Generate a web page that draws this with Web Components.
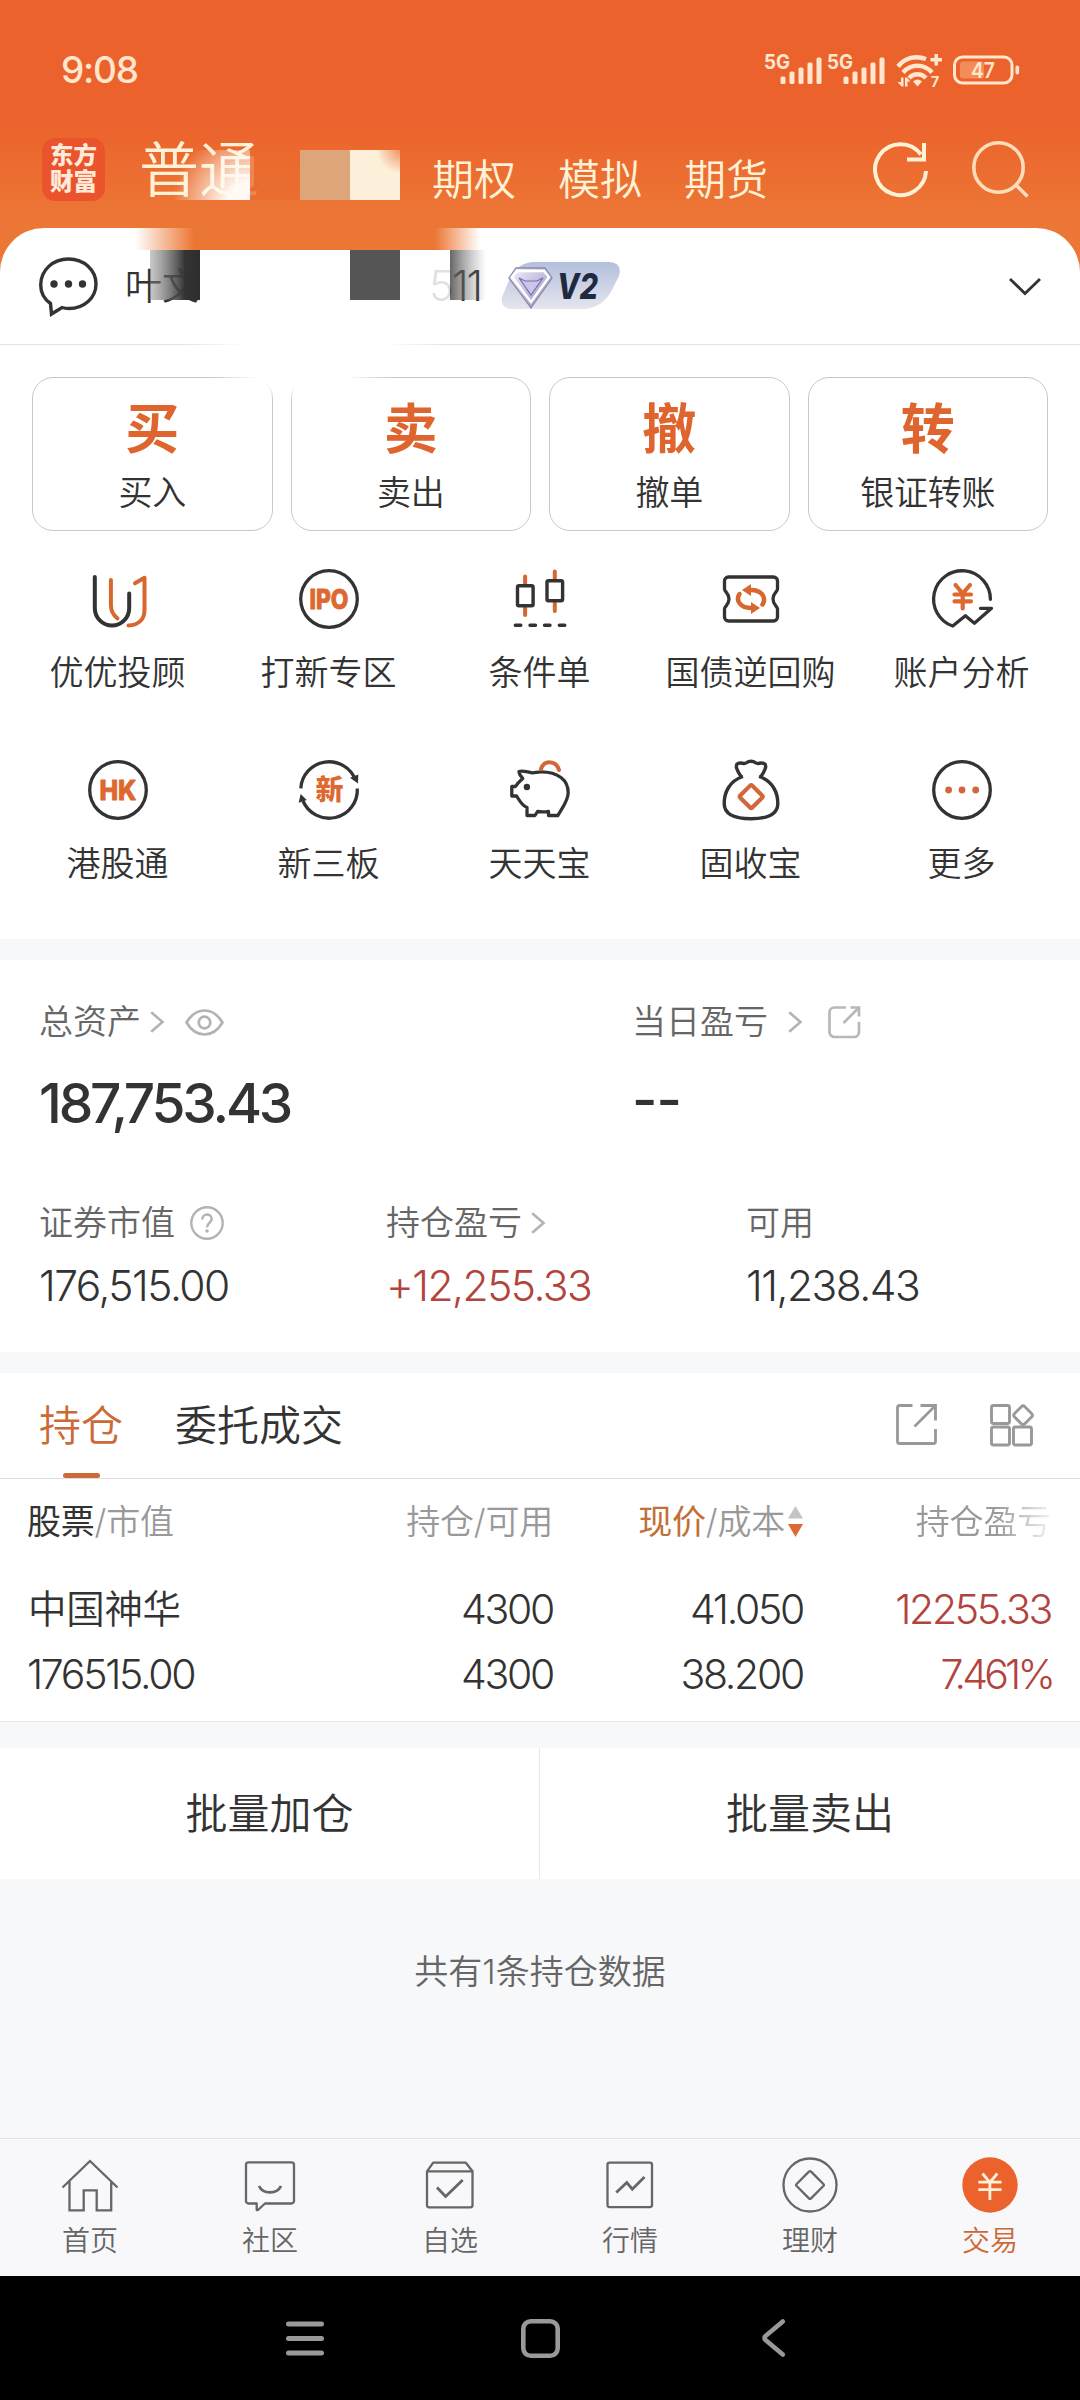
<!DOCTYPE html>
<html lang="zh-CN">
<head>
<meta charset="UTF-8">
<title>东方财富 - 交易</title>
<style>
    body {
        margin: 0;
        width: 1080px;
        background: #f7f8fa;
        color: #333;
        font-family: Inter, "Noto Sans CJK SC", sans-serif;
        font-size: 34px;
        font-weight: 350;
        line-height: 1;
    }
</style>
</head>
<body>
<trade-app></trade-app>

<script>
// Icônes dessinées dans une boîte 60x60, sauf mention contraire
const ICONS = {
    chat: `<g fill="none" stroke="#333" stroke-width="3.4"><path d="M11.5 46.5C5 42 1.7 35 1.7 28 1.7 13 14 2 29.500 2S57 13 57 27 45 51.500 30 51.500c-3 0-5-.3-7-1L12.500 57Z"/></g><g fill="#333"><circle cx="15" cy="27" r="3.7"/><circle cx="29.500" cy="27" r="3.7"/><circle cx="43.500" cy="27" r="3.7"/></g>`,
    refresh: `<g fill="none" stroke="#fff1d6" stroke-width="4"><path d="M54 30A25.500 25.500 0 1 1 49 13.500"/><path d="M52 2V18.500H35"/></g>`,
    search: `<g fill="none" stroke="#ffdcba" stroke-width="3.6"><circle cx="26.500" cy="26.500" r="24.700"/><path d="M43.500 43.500 55.500 55.500"/></g>`,
    you: `<g fill="none" stroke-width="4" stroke-linecap="round" stroke-linejoin="round"><path stroke="#333" d="M6.800 8V39A17.200 17.600 0 0 0 41.200 39V24.500"/><g stroke="#d8672f"><path d="M22.900 11V36C22.900 42 25 46 29.500 49.300"/><path d="M40.500 56.500C51 56 56.500 50 56.500 41V8.700L47 14.300"/></g></g>`,
    ipo: `<circle cx="30" cy="30" r="28.300" fill="none" stroke="#333" stroke-width="3.300"/><text x="30" y="40" text-anchor="middle" textLength="39" lengthAdjust="spacingAndGlyphs" font-size="27" font-weight="800" fill="#dd6830" stroke="#dd6830" stroke-width=".8" stroke-linejoin="round">IPO</text>`,
    candle: `<g fill="none" stroke-width="4" stroke-linecap="round"><path stroke="#d8672f" d="M15.100 7.500V15M15.100 38V46M44.800 2.500V10M44.800 34V42"/><g stroke="#333" stroke-width="3.400"><rect x="7.500" y="16.700" width="15.600" height="20" rx="1.500"/><rect x="37" y="11.700" width="15.600" height="20" rx="1.500"/><path d="M5.300 56.300h5.500M20 56.300h5.500M34.500 56.300h5.500M49.300 56.300h5.500"/></g></g>`,
    ticket: `<path fill="none" stroke="#333" stroke-width="3.300" stroke-linejoin="round" d="M7.500 8H52.500a4 4 0 0 1 4 4V20C56.500 23 52 24 52 30S56.500 37 56.500 40V48a4 4 0 0 1-4 4H7.500a4 4 0 0 1-4-4V40C3.500 37 8 36 8 30S3.500 23 3.500 20V12a4 4 0 0 1 4-4Z"/><g fill="none" stroke="#d8672f" stroke-width="4.500" stroke-linecap="round"><path d="M18.500 25C14 32 20 39 30 39"/><path d="M41.500 35.500C46 28 40 21 30 21"/></g><path fill="#d8672f" d="M30 33v12l9-6ZM30 15v12l-9-6Z"/>`,
    analysis: `<path fill="none" stroke="#333" stroke-width="3.300" stroke-linejoin="round" stroke-linecap="round" d="M58.400 30.300A28.400 28.400 0 1 0 20.700 57L33.400 46.700 42.400 54.300 59.500 39.300H48.500"/><path fill="none" stroke="#dd6830" stroke-width="4.200" stroke-linecap="round" d="M23.500 16 30.700 24.500 38 16M30.700 25V39.500M22.500 25.500H39M22.500 32.300H39"/>`,
    hk: `<circle cx="30" cy="30" r="28.300" fill="none" stroke="#333" stroke-width="3.300"/><text x="30" y="40" text-anchor="middle" textLength="37" lengthAdjust="spacingAndGlyphs" font-size="27" font-weight="800" fill="#dd6830" stroke="#dd6830" stroke-width=".8" stroke-linejoin="round">HK</text>`,
    neeq: `<g fill="none" stroke="#333" stroke-width="3.300"><path d="M1.800 28.300A28.300 28.300 0 0 1 56.500 20"/><path d="M58.300 28.500A28.300 28.300 0 0 1 4 41"/></g><path fill="#333" d="M51 17.700 59.300 14.500 59 23.500ZM-.3 42.800 1.600 34 7.800 40Z"/><text x="30.500" y="39.500" text-anchor="middle" font-size="28" font-weight="900" fill="#dd6830">新</text>`,
    pig: `<path fill="none" stroke="#333" stroke-width="3.300" stroke-linejoin="round" d="M12.800 18.500C10.500 16 9 14.500 9 11.500 13 10 18 12.500 22 12.800 25 13 27 11.800 31 11.800 48 11.800 58.200 20 58.200 32.500 58.200 41 52 48 47.900 55.500H38.500V51.300C35 52 31 52 27.500 51.500L25 55.500H17V47.500C11 45 9.500 40 6.500 36H1.800V26.500H5.500C7.500 23 10 21 12.800 18.500Z"/><circle cx="16.900" cy="27" r="3.200" fill="#333"/><path fill="none" stroke="#d0683a" stroke-width="4" stroke-linecap="round" d="M31 9C34 0 46 0 49 10"/>`,
    bag: `<g fill="none" stroke="#333" stroke-width="3.400" stroke-linejoin="round"><path d="M20.400 17C16 11 13.500 5 17 3.500 20 2 23 4.500 25 3 28 .8 32 .8 35 3 37 4.500 40 2 43 3.500 46.500 5 44 11 39.600 17"/><path d="M22 16.500C8 21 3.200 33 3.200 43.500 3.200 55 15 58.700 30 58.700S56.800 55 56.800 43.500C56.800 33 52 21 38 16.500"/></g><rect x="21.700" y="28.100" width="17" height="17" rx="1.500" transform="rotate(45 30.200 36.600)" fill="none" stroke="#d0683a" stroke-width="4.200"/>`,
    more: `<circle cx="30" cy="30" r="28.300" fill="none" stroke="#333" stroke-width="3.300"/><g fill="#d0683a"><circle cx="16.600" cy="30" r="3.400"/><circle cx="30" cy="30" r="3.400"/><circle cx="43.700" cy="30" r="3.400"/></g>`,
    home: `<path d="M2.500 33.500 30 7 57.500 33.500M9.500 27V56.300H23.700V36.300H36.700V56.300H51.200V27"/>`,
    community: `<path stroke-linejoin="round" d="M8.500 8.300H51.500a2.500 2.500 0 0 1 2.500 2.500V47a2.500 2.500 0 0 1-2.500 2.500H25L18 56H16.700V49.500H8.500A2.500 2.500 0 0 1 6 47V10.800A2.500 2.500 0 0 1 8.500 8.300Z"/><path stroke-width="2.800" d="M19 32C23 40.500 37 40.500 41 32"/>`,
    favorite: `<path stroke-linejoin="round" d="M7 17.300 13.200 8.700H45.800L52.500 17.300V51.300a2 2 0 0 1-2 2H9a2 2 0 0 1-2-2ZM7 17.300H52.500"/><path stroke-width="2.800" d="M17 33.500 25.600 42.500 42.700 26"/>`,
    market: `<rect x="7.500" y="8.600" width="44.500" height="44.500" rx="2"/><path stroke-width="2.800" d="M16.300 38.500 26.800 28.500 32.300 35.200 44.500 23"/>`,
    wealth: `<circle cx="30" cy="31" r="26.500"/><rect x="19.800" y="20.800" width="20.400" height="20.400" rx="1.500" transform="rotate(45 30 31)"/>`,
    trade: `<circle cx="30" cy="31" r="27.700" fill="#eb622c" stroke="none"/><path stroke="#fff0d6" stroke-width="2.800" d="M22.500 19.500 29.900 28.500 37.300 19.500M29.900 28V46M18.300 28.200H41.500M18.300 35.700H41.500"/>`,
    eye: `<g fill="none" stroke="#b3b3b3" stroke-width="2.700"><path stroke-linejoin="round" d="M1.500 13.500C11-2.500 28-2.500 37.500 13.500 28 29.500 11 29.500 1.500 13.500Z"/><circle cx="19.500" cy="13.500" r="5.800"/></g>`,
    help: `<circle cx="17" cy="17" r="15.700" fill="none" stroke="#b3b3b3" stroke-width="2.400"/><path fill="none" stroke="#b3b3b3" stroke-width="2.500" d="M12.300 13.500C12.300 7 21.700 7 21.700 13 21.700 17 17 16.500 17 21.500"/><circle cx="17" cy="25" r="1.800" fill="#b3b3b3"/>`,
    right: `<path fill="none" stroke="#b3b3b3" stroke-width="2.600" d="M1.200 1.200 12.500 11 1.200 20.800"/>`,
    down: `<path fill="none" stroke="#333" stroke-width="2.800" d="M1 1 16 15.500 31 1"/>`,
    shareSmall: `<path fill="none" stroke="#b8b8b8" stroke-width="2.700" d="M18 1.500H6.500a5 5 0 0 0-5 5V26a5 5 0 0 0 5 5H26a5 5 0 0 0 5-5V16M22.500 1.500H31V10.500M15.500 17 30.500 2"/>`,
    share: `<path fill="none" stroke="#999" stroke-width="2.800" d="M16.500 1.500H3.500a2 2 0 0 0-2 2V37.500a2 2 0 0 0 2 2H37.500a2 2 0 0 0 2-2V25M24.500 1.500H39.500V16.500M18.500 22.500 39 2"/>`,
    blocks: `<g fill="none" stroke="#999" stroke-width="2.900"><rect x="1.500" y="1.500" width="18" height="18" rx="2"/><rect x="1.500" y="23" width="18" height="18" rx="2"/><rect x="23.500" y="23" width="18" height="18" rx="2"/><rect x="25.800" y="3.900" width="14.500" height="14.500" rx="2.500" transform="rotate(45 33.000 11.200)"/></g>`,
    sort: `<path fill="#c4c4c4" d="M7.500 0 15 12.500H0Z"/><path fill="#dc6a32" d="M0 18H15L7.500 31Z"/>`,
    menu: `<path stroke="#999" stroke-width="5" stroke-linecap="round" d="M2.500 4H35.500M2.500 18.500H35.500M2.500 33H35.500"/>`,
    square: `<rect x="2.300" y="2.300" width="34.400" height="34.400" rx="7.500" fill="none" stroke="#999" stroke-width="4.600"/>`,
    back: `<path fill="none" stroke="#999" stroke-width="4.600" stroke-linecap="round" stroke-linejoin="round" d="M20.800 2.500 3.500 17Q1.500 19 3.500 21L20.800 35.500"/>`
};

const icon = (name, w = 60, h = w, box = `0 0 ${w} ${h}`) =>
    `<svg width="${w}" height="${h}" viewBox="${box}" fill="none">${ICONS[name]}</svg>`;

// Classe de base : shadow root ouvert, styles puis contenu
class BaseElement extends HTMLElement {
    constructor() {
        super();
        this.attachShadow({ mode: 'open' });
    }

    connectedCallback() {
        this.shadowRoot.innerHTML = `
            <style>
                svg { display: block; flex: none; overflow: visible; }
                ${this.styles()}
            </style>
            ${this.template()}
        `;
    }

    styles() { return ''; }
    template() { return '<slot></slot>'; }
}

class StatusBar extends BaseElement {
    styles() {
        return `
            :host {
                display: flex;
                align-items: center;
                justify-content: space-between;
                height: 139px;
                margin-bottom: -47px;
                padding: 0 60px 0 61px;
                box-sizing: border-box;
                color: #ffe6cc;
            }
            .time { font-size: 37px; font-weight: 500; letter-spacing: -1.2px; }
        `;
    }

    bars(x) {
        return [76, 71, 67, 62, 57].map((top, i) =>
            `<rect x="${x + i * 9}" y="${top}" width="5" height="${83.5 - top}" rx="1.5"/>`).join('');
    }

    template() {
        return `
            <span class="time">9:08</span>
            <svg width="256" height="40" viewBox="764 49.5 256 40" fill="#ffe6cc">
                <text x="764" y="68.500" font-size="20" font-weight="700" textLength="26" lengthAdjust="spacingAndGlyphs">5G</text>
                ${this.bars(780.500)}
                <text x="827" y="68.500" font-size="20" font-weight="700" textLength="26" lengthAdjust="spacingAndGlyphs">5G</text>
                ${this.bars(843.500)}
                <g fill="none" stroke="#ffe6cc" stroke-width="4.500">
                    <path d="M898 66C905 57 916 54.500 926 58.500"/>
                    <path d="M903 72C911 63 924 63 932 72"/>
                    <path d="M909 77.500C914 72.500 921 72.500 926 77.500"/>
                </g>
                <path d="M913 81Q917.500 77 922 81L917.500 86ZM930.500 57.500h4v-4h3.500v4h4v3.500h-4v4h-3.500v-4h-4Z"/>
                <path d="M901 77h2.500v9h-2l-4-4.500h3.500ZM905 86h2.500v-5h3l-3.500-4h-2Z"/>
                <text x="931" y="86.500" font-size="14" font-weight="700">7</text>
                <rect x="954.500" y="56.500" width="57.500" height="26" rx="8" fill="none" stroke="#ffe6cc" stroke-width="3"/>
                <rect x="960" y="61" width="24" height="17" rx="3" fill="#f28d58"/>
                <rect x="1015.500" y="65" width="3.600" height="9" rx="1.800"/>
                <text x="983" y="77.800" font-size="22" font-weight="600" text-anchor="middle" textLength="24" lengthAdjust="spacingAndGlyphs">47</text>
            </svg>
        `;
    }
}

class AppHeader extends BaseElement {
    styles() {
        return `
            :host {
                display: flex;
                align-items: center;
                height: 154px;
                margin-bottom: -18px;
                padding: 0 51px 0 42px;
                color: #fff1d6;
            }
            .logo {
                display: grid;
                place-content: center;
                width: 63px;
                height: 63px;
                border-radius: 13px;
                background: #ea532b;
                color: #ffe9d8;
                font-size: 23.500px;
                font-weight: 900;
                line-height: 26.500px;
            }
            .main { margin-left: 34px; font-size: 60px; width: 293px; padding-top: 2px; }
            nav { display: flex; gap: 42px; padding-top: 21px; font-size: 42px; }
            .tools { display: flex; gap: 43px; margin-left: auto; }
        `;
    }

    template() {
        return `
            <div class="logo"><span>东方</span><span>财富</span></div>
            <div class="main">普通</div>
            <nav><span>期权</span><span>模拟</span><span>期货</span></nav>
            <div class="tools">${icon('refresh', 57)}${icon('search', 57)}</div>
        `;
    }
}

class AccountBar extends BaseElement {
    styles() {
        return `
            :host {
                display: flex;
                align-items: center;
                height: 116px;
                padding: 0 39px;
                background: #fff;
                border-radius: 44px 44px 0 0;
                border-bottom: 1px solid #e2e2e2;
            }
            .name { width: 304px; margin-left: 27px; font-size: 37px; }
            .code { width: 73px; font-size: 42px; font-weight: 300; letter-spacing: -2px; }
            .down { margin-left: auto; }
        `;
    }

    template() {
        return `
            ${icon('chat', 59)}
            <span class="name">叶文</span>
            <span class="code">511</span>
            <svg width="118" height="48" viewBox="0 0 118 48">
                <defs>
                    <linearGradient id="badge" x2="0" y2="1"><stop stop-color="#b3bfdc"/><stop offset="1" stop-color="#e4e6ee"/></linearGradient>
                    <linearGradient id="gem" x2="1" y2="1"><stop stop-color="#f6f5ff"/><stop offset="1" stop-color="#8f86b8"/></linearGradient>
                </defs>
                <path fill="url(#badge)" d="M33 0H107Q121 1 117 14L110 28Q100 47 80 47H9Q-2 46 0 35L8 16Q16 0 33 0Z"/>
                <path fill="url(#gem)" stroke="#8d89a8" stroke-width="1.300" d="M14 6H43L50 16 29 46 7 16Z"/>
                <path fill="none" stroke="#fff" stroke-width="2.500" d="M10 15 15 9H42L47 15 29 40Z"/>
                <path fill="#c9c6ee" stroke="#7770a8" stroke-width="1.200" d="M17 16 23 19H35L41 16 29 33Z"/>
                <text x="55" y="37" font-size="36" font-weight="800" font-style="italic" fill="#1f2940" textLength="41" lengthAdjust="spacingAndGlyphs">V2</text>
            </svg>
            <div class="down">${icon('down', 32, 17)}</div>
        `;
    }
}

// Mosaïque posée par-dessus l'en-tête pour masquer les données du compte
class PrivacyMask extends BaseElement {
    styles() {
        return `
            :host { position: absolute; left: 100px; top: 130px; pointer-events: none; }
        `;
    }

    template() {
        return `
            <svg width="400" height="300" viewBox="100 130 400 300">
                <defs>
                    <radialGradient id="glow" gradientUnits="userSpaceOnUse" cx="250" cy="205" r="78">
                        <stop offset=".3" stop-color="#fffaf4"/><stop offset="1" stop-color="#fffaf4" stop-opacity="0"/>
                    </radialGradient>
                    <radialGradient id="cream" gradientUnits="userSpaceOnUse" cx="402" cy="148" r="26">
                        <stop stop-color="#ee8a55"/><stop offset="1" stop-color="#ee8a55" stop-opacity="0"/>
                    </radialGradient>
                    <linearGradient id="lid" gradientUnits="userSpaceOnUse" x1="135" x2="480" y1="0" y2="0">
                        <stop stop-color="#ec7734" stop-opacity="0"/><stop offset=".17" stop-color="#ec7734"/>
                        <stop offset=".87" stop-color="#ec7734"/><stop offset="1" stop-color="#ec7734" stop-opacity="0"/>
                    </linearGradient>
                    <linearGradient id="inkA"><stop stop-color="#888" stop-opacity=".45"/><stop offset=".7" stop-color="#333"/><stop offset="1" stop-color="#2e2e2e"/></linearGradient>
                    <linearGradient id="inkB"><stop stop-color="#555" stop-opacity=".9"/><stop offset="1" stop-color="#888" stop-opacity="0"/></linearGradient>
                    <linearGradient id="paper"><stop stop-color="#fff" stop-opacity="0"/><stop offset=".25" stop-color="#fff"/><stop offset=".75" stop-color="#fff"/><stop offset="1" stop-color="#fff" stop-opacity="0"/></linearGradient>
                    <radialGradient id="fade"><stop offset=".55" stop-color="#fff"/><stop offset="1" stop-color="#fff" stop-opacity="0"/></radialGradient>
                </defs>
                <rect x="150" y="150" width="100" height="50" fill="url(#glow)"/>
                <rect x="250" y="155" width="50" height="45" fill="#eb6c30" fill-opacity=".8"/>
                <rect x="300" y="150" width="50" height="50" fill="#dda579"/>
                <rect x="350" y="150" width="50" height="50" fill="#fdf0db"/>
                <rect x="350" y="150" width="50" height="50" fill="url(#cream)"/>
                <rect x="135" y="226" width="345" height="24" fill="url(#lid)"/>
                <rect x="150" y="250" width="50" height="50" fill="url(#inkA)"/>
                <rect x="350" y="250" width="50" height="50" fill="#555"/>
                <rect x="400" y="251" width="50" height="60" fill="#fff" fill-opacity=".85"/>
                <rect x="450" y="250" width="36" height="50" fill="url(#inkB)"/>
                <rect x="180" y="341" width="270" height="6" fill="url(#paper)"/>
                <ellipse cx="302" cy="368" rx="92" ry="34" fill="url(#fade)"/>
            </svg>
        `;
    }
}

class TradeButton extends BaseElement {
    styles() {
        return `
            :host {
                display: flex;
                flex-direction: column;
                align-items: center;
                height: 152px;
                border: 1px solid #c9c9c9;
                border-radius: 21px;
            }
            b { font-size: 54px; line-height: 60px; margin-top: 22px; color: #df652e; }
            span { font-size: 34px; line-height: 40px; margin-top: 13px; letter-spacing: -.3px; }
        `;
    }

    template() {
        return `<b>${this.getAttribute('mark')}</b><span><slot></slot></span>`;
    }
}

class QuickEntry extends BaseElement {
    styles() {
        return `
            :host { display: flex; flex-direction: column; align-items: center; height: 191px; }
            span { margin-top: 27px; white-space: nowrap; }
        `;
    }

    template() {
        return `${icon(this.getAttribute('icon'))}<span><slot></slot></span>`;
    }
}

// Libellé avec icônes éventuelles, valeur dessous
class AssetCell extends BaseElement {
    styles() {
        return `
            .label { display: flex; align-items: center; height: 40px; color: #666; white-space: nowrap; }
            .label svg:first-of-type { margin-left: var(--icon-gap, 9px); }
            .label svg + svg { margin-left: var(--next-gap, 22px); }
            .value { height: 48px; line-height: 48px; margin-top: 19px; font-size: 42.500px; letter-spacing: var(--tracking, -1.500px); }
            :host { display: block; }
            :host([large]) .value { height: 60px; line-height: 60px; margin-top: 31px; font-size: 55px; font-weight: 500; }
            :host([rise]) .value { color: #b2433d; }
        `;
    }

    template() {
        const sizes = { right: [13, 22], eye: [39, 27], help: [34, 34], shareSmall: [32, 32] };
        const icons = (this.getAttribute('icons') || '').split(' ').filter(Boolean)
            .map(name => icon(name, ...sizes[name])).join('');
        return `
            <div class="label"><slot></slot>${icons}</div>
            <div class="value"><span part="value">${this.getAttribute('value')}</span></div>
        `;
    }
}

class AssetPanel extends BaseElement {
    styles() {
        return `
            :host { display: block; height: 350px; padding: 42px 0 0 39px; background: #fff; }
            .top { display: grid; grid-template-columns: 593px 1fr; }
            .bottom { display: grid; grid-template-columns: 347px 360px 1fr; margin-top: 70px; }
            .none::part(value) { display: inline-block; transform: translateY(-4px); }
        `;
    }

    template() {
        return `
            <div class="top">
                <asset-cell large icons="right eye" value="187,753.43" style="--tracking: -3.2px">总资产</asset-cell>
                <asset-cell large class="none" icons="right shareSmall" value="--" style="--icon-gap: 20px; --next-gap: 27px; --tracking: -1px">当日盈亏</asset-cell>
            </div>
            <div class="bottom">
                <asset-cell icons="help" value="176,515.00" style="--icon-gap: 15px">证券市值</asset-cell>
                <asset-cell rise icons="right" value="+12,255.33">持仓盈亏</asset-cell>
                <asset-cell value="11,238.43">可用</asset-cell>
            </div>
        `;
    }
}

class PositionTabs extends BaseElement {
    styles() {
        return `
            :host {
                display: flex;
                align-items: center;
                height: 105px;
                padding: 0 47px 0 39px;
                background: #fff;
                border-bottom: 1px solid #ddd;
                font-size: 42px;
            }
            .tab {
                display: grid;
                grid-template-rows: 95px 5px;
                align-items: center;
                justify-items: center;
                padding-top: 5px;
                margin-right: 52px;
            }
            .active { color: #cb6a36; }
            .active::after { content: ''; width: 37px; height: 5px; border-radius: 3px; background: #cd6936; }
            .tools { display: flex; gap: 53px; margin-left: auto; }
        `;
    }

    template() {
        return `
            <div class="tab active"><span>持仓</span></div>
            <div class="tab"><span>委托成交</span></div>
            <div class="tools">${icon('share', 41)}${icon('blocks', 43)}</div>
        `;
    }
}

class PositionTable extends BaseElement {
    styles() {
        return `
            :host { display: block; height: 242px; background: #fff; border-bottom: 1px solid #e6e6e6; }
            .head, .row { display: grid; grid-template-columns: 300px 226px 250px 248px; padding-left: 27px; }
            .head { height: 84px; padding-top: 1px; box-sizing: border-box; align-items: center; color: #999; letter-spacing: -.2px; }
            .head > *, .row > * { text-align: right; }
            .head > :first-child, .row > .l { text-align: left; }
            .head b { font-weight: 400; color: #333; }
            .head b.hot { color: #c07038; }
            .sort { display: flex; align-items: center; justify-content: flex-end; gap: 3px; }
            .fade { -webkit-mask-image: linear-gradient(90deg, #000 78%, rgba(0,0,0,.12)); mask-image: linear-gradient(90deg, #000 78%, rgba(0,0,0,.12)); }
            .row { padding-top: 14px; line-height: 65px; font-size: 41px; letter-spacing: -2.3px; }
            .row .name { font-size: 38.500px; letter-spacing: -.3px; padding-left: 1px; }
            .row .ratio { letter-spacing: -3.800px; margin-right: -1px; }
            .rise { color: #b2433d; }
        `;
    }

    template() {
        return `
            <div class="head">
                <span><b>股票</b>/市值</span>
                <span>持仓/可用</span>
                <span class="sort"><span><b class="hot">现价</b>/成本</span>${icon('sort', 15, 31)}</span>
                <span class="fade">持仓盈亏</span>
            </div>
            <div class="row">
                <span class="l name">中国神华</span><span>4300</span><span>41.050</span><span class="rise">12255.33</span>
                <span class="l">176515.00</span><span>4300</span><span>38.200</span><span class="rise ratio">7.461%</span>
            </div>
        `;
    }
}

class BatchBar extends BaseElement {
    styles() {
        return `
            :host { display: grid; grid-template-columns: 539px 1fr; height: 131px; background: #fff; font-size: 42px; }
            div { display: grid; place-content: center; }
            div + div { border-left: 1px solid #e8e8e8; }
        `;
    }

    template() {
        return `<div>批量加仓</div><div>批量卖出</div>`;
    }
}

class TabItem extends BaseElement {
    styles() {
        return `
            :host { display: flex; flex-direction: column; align-items: center; padding-top: 15px; color: #666; font-size: 28px; }
            :host([active]) { color: #cb6a36; }
            svg { stroke: #666; stroke-width: 2.300; }
            span { margin-top: 13px; }
        `;
    }

    template() {
        return `${icon(this.getAttribute('icon'))}<span><slot></slot></span>`;
    }
}

class TabBar extends BaseElement {
    styles() {
        return `
            :host { display: grid; grid-template-columns: repeat(6, 1fr); height: 137px; background: #f8f8fb; border-top: 1px solid #e2e2e4; }
        `;
    }
}

class SystemNav extends BaseElement {
    styles() {
        return `
            :host { display: flex; align-items: center; height: 124px; padding-left: 286px; background: #000; }
            svg:nth-of-type(2) { margin: 0 202px 0 197px; }
        `;
    }

    template() {
        return `${icon('menu', 38, 37)}${icon('square', 39)}${icon('back', 23, 38)}`;
    }
}

class TradeApp extends BaseElement {
    styles() {
        return `
            :host { display: flex; flex-direction: column; position: relative; width: 1080px; height: 2400px; }
            .hero { background: linear-gradient(#eb622c 120px, #ec7635 215px, #ec7836); }
            .buttons { display: grid; grid-template-columns: repeat(4, 1fr); gap: 18px; padding: 32px 32px 0; background: #fff; }
            .entries { display: grid; grid-template-columns: repeat(5, 1fr); height: 370px; padding: 38px 13px 0 12px; background: #fff; }
            asset-panel { margin-top: 21px; }
            position-tabs { margin-top: 21px; }
            batch-bar { margin-top: 26px; }
            .empty { flex: 1; padding-top: 76px; text-align: center; color: #666; }
        `;
    }

    template() {
        const entries = [
            ['you', '优优投顾'], ['ipo', '打新专区'], ['candle', '条件单'], ['ticket', '国债逆回购'], ['analysis', '账户分析'],
            ['hk', '港股通'], ['neeq', '新三板'], ['pig', '天天宝'], ['bag', '固收宝'], ['more', '更多']
        ];
        const tabs = [
            ['home', '首页'], ['community', '社区'], ['favorite', '自选'],
            ['market', '行情'], ['wealth', '理财'], ['trade', '交易']
        ];
        return `
            <div class="hero">
                <status-bar></status-bar>
                <app-header></app-header>
                <account-bar></account-bar>
            </div>
            <div class="buttons">
                <trade-button mark="买">买入</trade-button>
                <trade-button mark="卖">卖出</trade-button>
                <trade-button mark="撤">撤单</trade-button>
                <trade-button mark="转">银证转账</trade-button>
            </div>
            <div class="entries">
                ${entries.map(([name, text]) => `<quick-entry icon="${name}">${text}</quick-entry>`).join('')}
            </div>
            <asset-panel></asset-panel>
            <position-tabs></position-tabs>
            <position-table></position-table>
            <batch-bar></batch-bar>
            <div class="empty">共有1条持仓数据</div>
            <tab-bar>
                ${tabs.map(([name, text]) => `<tab-item icon="${name}" ${name === 'trade' ? 'active' : ''}>${text}</tab-item>`).join('')}
            </tab-bar>
            <system-nav></system-nav>
            <privacy-mask></privacy-mask>
        `;
    }
}

customElements.define('status-bar', StatusBar);
customElements.define('app-header', AppHeader);
customElements.define('account-bar', AccountBar);
customElements.define('privacy-mask', PrivacyMask);
customElements.define('trade-button', TradeButton);
customElements.define('quick-entry', QuickEntry);
customElements.define('asset-cell', AssetCell);
customElements.define('asset-panel', AssetPanel);
customElements.define('position-tabs', PositionTabs);
customElements.define('position-table', PositionTable);
customElements.define('batch-bar', BatchBar);
customElements.define('tab-item', TabItem);
customElements.define('tab-bar', TabBar);
customElements.define('system-nav', SystemNav);
customElements.define('trade-app', TradeApp);
</script>
</body>
</html>
